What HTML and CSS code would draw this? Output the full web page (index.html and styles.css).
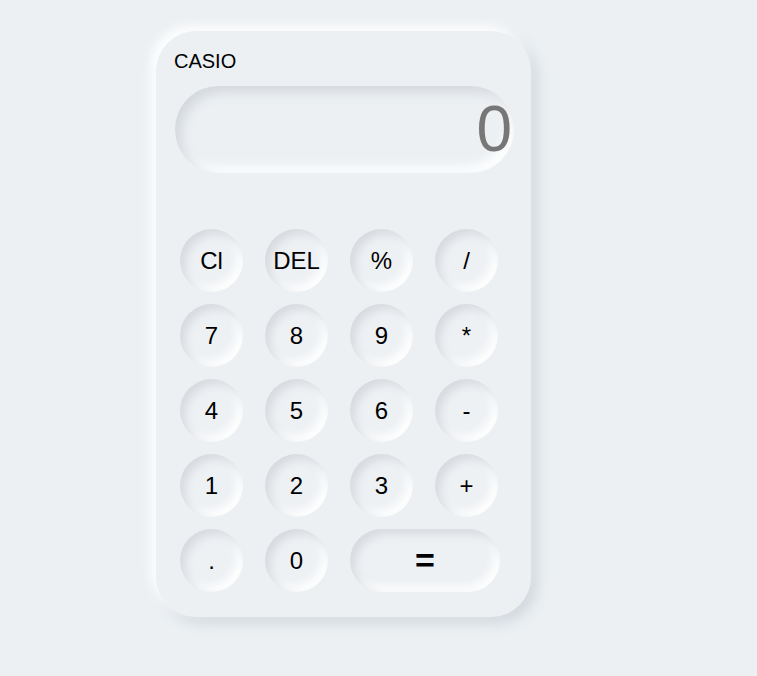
FILE: index.html
```html
<!DOCTYPE html>
<html>
<head>
<meta charset="utf-8">
<link rel="stylesheet" href="styles.css">
</head>
<body>
<div class="calc">
  <div class="brand">CASIO</div>
  <div class="display">0</div>
  <div class="keys">
    <button class="key">Cl</button>
    <button class="key">DEL</button>
    <button class="key">%</button>
    <button class="key">/</button>
    <button class="key">7</button>
    <button class="key">8</button>
    <button class="key">9</button>
    <button class="key">*</button>
    <button class="key">4</button>
    <button class="key">5</button>
    <button class="key">6</button>
    <button class="key">-</button>
    <button class="key">1</button>
    <button class="key">2</button>
    <button class="key">3</button>
    <button class="key">+</button>
    <button class="key">.</button>
    <button class="key">0</button>
    <button class="key equal">=</button>
  </div>
</div>
</body>
</html>
```
FILE: styles.css
```css
html, body {
  margin: 0;
  padding: 0;
}
body {
  background: #ecf0f3;
  width: 757px;
  height: 676px;
  font-family: "Liberation Sans", Arial, sans-serif;
  padding: 31px 0 0 156px;
  box-sizing: border-box;
}
.calc {
  width: 375px;
  height: 586px;
  box-sizing: border-box;
  border-radius: 40px;
  background: #ecf0f3;
  box-shadow: -5px -5px 12px #ffffff, 6px 6px 14px #d1d6dc;
  padding: 18px 18px 0 18px;
}
.brand {
  font-size: 20px;
  line-height: 24px;
  color: #000;
}
.display {
  margin-top: 13px;
  margin-left: 1px;
  height: 87px;
  width: 339px;
  border-radius: 44px;
  box-sizing: border-box;
  box-shadow: inset 6px 6px 12px #d4d8dd, inset -6px -6px 12px #ffffff;
  text-align: right;
  font-size: 64px;
  line-height: 87px;
  color: #777;
  padding-right: 2px;
}
.keys {
  margin-top: 56px;
  margin-left: 6px;
  display: grid;
  grid-template-columns: repeat(4, 63px);
  grid-auto-rows: 63px;
  column-gap: 22px;
  row-gap: 12px;
}
.key {
  width: 63px;
  height: 63px;
  border: none;
  border-radius: 50%;
  background: #eef1f4;
  box-shadow: inset 5px 5px 10px #d6dade, inset -5px -5px 10px #ffffff;
  font-family: "Liberation Sans", Arial, sans-serif;
  font-size: 24px;
  color: #000;
  padding: 0;
  display: flex;
  align-items: center;
  justify-content: center;
}
.key.equal {
  grid-column: span 2;
  width: 150px;
  border-radius: 32px;
  font-size: 34px;
  font-weight: bold;
}
```
